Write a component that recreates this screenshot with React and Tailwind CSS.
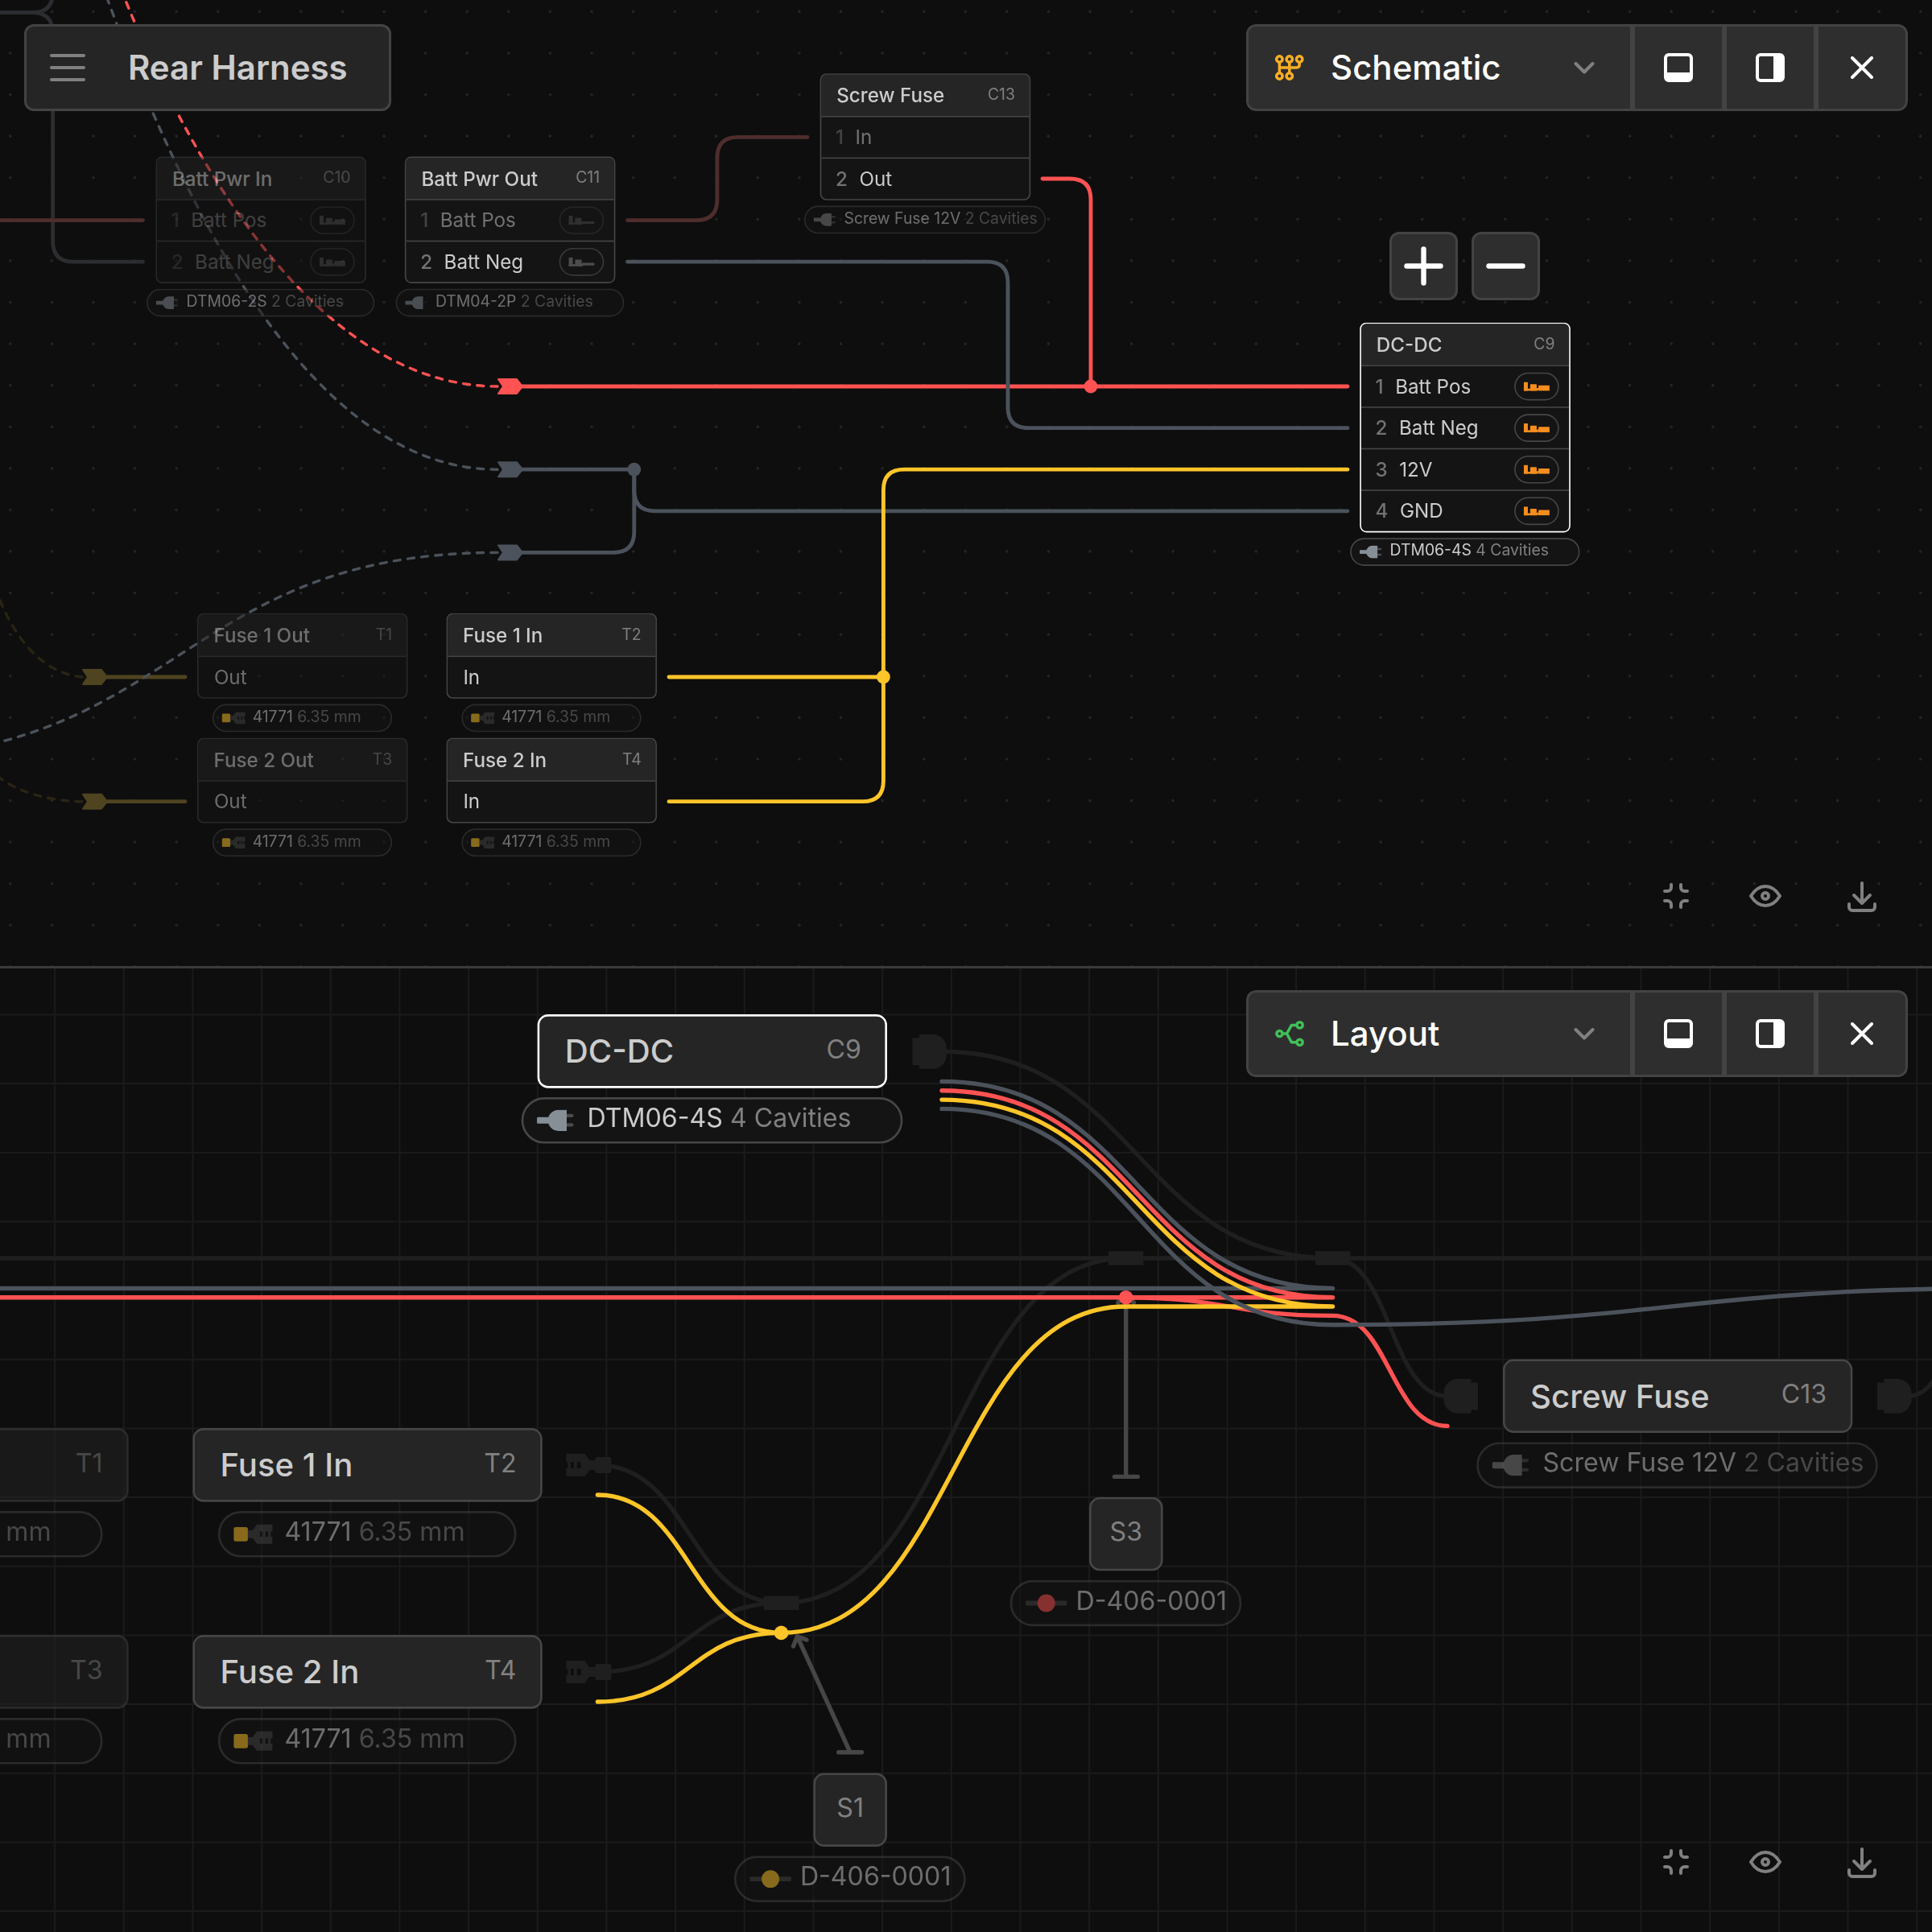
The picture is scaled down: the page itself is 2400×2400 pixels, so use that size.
import React from "react";

const RED = "#ff5252";
const SLATE = "#4b525b";
const YELLOW = "#ffc529";

/* One grid cell of a canvas. Nodes are drawn large and scaled down by their canvas. */
const CELL = 128;

/* ---------- icons ---------- */

function SchematicIcon() {
  return (
    <svg width="36" height="32" viewBox="0 0 36 32" fill="none" stroke="#fcae24" strokeWidth="3.5">
      <circle cx="5.4" cy="5.5" r="3.7" />
      <circle cx="17.8" cy="5.5" r="3.7" />
      <circle cx="30.2" cy="5.5" r="3.7" />
      <circle cx="5.4" cy="26.5" r="3.7" />
      <circle cx="17.8" cy="26.5" r="3.7" />
      <path d="M5.4 9V23M17.8 9V23M5.4 16H26.5Q30.2 16 30.2 12.3V9" />
    </svg>
  );
}

function LayoutIcon() {
  return (
    <svg width="36" height="32" viewBox="0 0 36 32" fill="none" stroke="#40c057" strokeWidth="3.5" strokeLinejoin="round">
      <circle cx="5.5" cy="16" r="3.6" />
      <circle cx="30.6" cy="5.4" r="3.6" />
      <circle cx="30.6" cy="26.8" r="3.6" />
      <path d="M9 16H14.5L20.5 5.4H27M14.5 16L20.5 26.8H27" />
    </svg>
  );
}

function PanelBottomIcon() {
  return (
    <svg width="36" height="36" viewBox="0 0 36 36" fill="#fff" fillRule="evenodd">
      <path d="M6 0H30A6 6 0 0 1 36 6V30A6 6 0 0 1 30 36H6A6 6 0 0 1 0 30V6A6 6 0 0 1 6 0ZM6 4A2 2 0 0 0 4 6V24H32V6A2 2 0 0 0 30 4Z" />
    </svg>
  );
}

function PanelRightIcon() {
  return (
    <svg width="36" height="36" viewBox="0 0 36 36" fill="#fff" fillRule="evenodd">
      <path d="M6 0H30A6 6 0 0 1 36 6V30A6 6 0 0 1 30 36H6A6 6 0 0 1 0 30V6A6 6 0 0 1 6 0ZM6 4A2 2 0 0 0 4 6V30A2 2 0 0 0 6 32H22V4Z" />
    </svg>
  );
}

function CloseIcon() {
  return (
    <svg width="28" height="28" viewBox="0 0 28 28" stroke="#fff" strokeWidth="4" strokeLinecap="round">
      <path d="M2 2L26 26M26 2L2 26" />
    </svg>
  );
}

function ChevronIcon() {
  return (
    <svg width="26" height="15" viewBox="0 0 26 15" fill="none" stroke="#808080" strokeWidth="4" strokeLinecap="round" strokeLinejoin="round">
      <path d="M2.5 2L13 12.5L23.5 2" />
    </svg>
  );
}

function PlugIcon({ color, prongs }) {
  return (
    <svg viewBox="0 0 17.2 10" className="h-[40px] w-[69px] shrink-0">
      {prongs && <path d="M13 2H16.2Q17 2 17 2.8T16.2 3.6H13ZM13 6.3H16.2Q17 6.3 17 7.1T16.2 7.9H13Z" fill="#4a4a4a" />}
      <rect x="0" y="3.5" width="7" height="3" rx="0.5" fill={color} />
      <path d="M13.8 0.1H10A4.9 4.9 0 0 0 10 9.9H13.8Z" fill={color} />
    </svg>
  );
}

function TerminalIcon() {
  return (
    <svg viewBox="0 0 18.2 10" className="h-[40px] w-[73px] shrink-0">
      <rect x="0" y="1.7" width="6.6" height="6.6" rx="1" fill="#ffc629" />
      <path
        fillRule="evenodd"
        fill="#464646"
        d="M6.6 3.2H8.8L10.8 0.5H18V3.8H17.2V6.2H18V9.5H10.8L8.8 6.8H6.6ZM12.2 3.8V6.2H13.4V3.8ZM14.8 3.8V6.2H16V3.8Z"
      />
    </svg>
  );
}

function SpliceIcon({ color }) {
  return (
    <svg viewBox="0 0 19.2 10" className="h-[40px] w-[77px] shrink-0">
      <rect x="0" y="3.9" width="19.2" height="2.2" rx="0.4" fill="#464646" />
      <circle cx="9.6" cy="5" r="4.1" fill={color} />
    </svg>
  );
}

function PinIcon({ color, male }) {
  return (
    <svg viewBox="0 0 20 7" fill={color} className="h-[28px] w-[80px]">
      <rect x="0" y="0" width="3.2" height="7" rx="0.4" />
      <rect x="0" y="5.2" width="11" height="1.7" />
      <rect x="5" y="1.7" width="5" height="5.2" rx="0.4" />
      {male ? (
        <rect x="10" y="4.3" width="10" height="1.9" rx="0.5" />
      ) : (
        <>
          <rect x="11.4" y="2.7" width="8.5" height="4.2" rx="0.4" />
          <rect x="10" y="4.7" width="2" height="1.5" />
        </>
      )}
    </svg>
  );
}

/* ---------- nodes ---------- */

const PLUGS = { slate: "#868e96", gray: "#808080" };

function PartPill({ part }) {
  return (
    <div
      className={
        "mt-[17px] mr-[2px] flex h-[86px] shrink-0 items-center rounded-full border-4 border-[#464646] bg-[#141414] pl-[25px] text-[48px] whitespace-pre " +
        (part.bright ? "opacity-100" : "opacity-50")
      }
      style={{ width: part.width }}
    >
      <span className={"flex shrink-0 items-center " + (part.icon === "terminal" ? "w-[95px]" : "w-[94px]")}>
        {part.icon === "plug" && <PlugIcon color={PLUGS[part.tone]} prongs={part.prongs} />}
        {part.icon === "terminal" && <TerminalIcon />}
        {part.icon === "splice" && <SpliceIcon color={part.tone} />}
      </span>
      <span className="relative -top-[5px] text-[#cccccc]">
        {part.name}
        {part.detail && <span className="text-[#808080]">{" " + part.detail}</span>}
      </span>
    </div>
  );
}

function Placed({ x, y, width, children }) {
  return (
    <div className="absolute flex flex-col items-center" style={{ left: x * CELL, top: y * CELL, width }}>
      {children}
    </div>
  );
}

function Pin({ pin, numbered, index }) {
  return (
    <div className="flex h-[128px] items-center border-t-4 border-[#464646] pr-[31px] pl-[44px] text-[60px]">
      <div className={"flex flex-1 items-center gap-[32px] pb-[3px] " + (pin.dim ? "opacity-50" : "opacity-100")}>
        {numbered && <span className="font-medium text-[#737373]">{index + 1}</span>}
        <span className="pl-[4px] whitespace-nowrap text-[#cccccc]">{pin.label}</span>
      </div>
      {pin.badge && (
        <span
          className={
            "flex h-[86px] w-[138px] items-center justify-center rounded-full border-4 " +
            (pin.badge === "orange" ? "border-[#464646] " : "border-[#393939] ") +
            (pin.dimBadge ? "opacity-50" : "opacity-100")
          }
        >
          <PinIcon color={pin.badge === "orange" ? "#f68d1e" : "#4c4c4c"} male={pin.male} />
        </span>
      )}
    </div>
  );
}

function ConnectorNode({ node }) {
  return (
    <Placed x={node.x} y={node.y} width={649}>
      <div
        className={
          "w-full overflow-hidden rounded-[20px] border-4 " +
          (node.selected ? "border-white " : "border-[#464646] ") +
          (node.pins ? "bg-[#141414] " : "bg-[#252525] pb-[2px] ") +
          (node.dim ? "opacity-50" : "opacity-100")
        }
      >
        <div className="flex h-[127px] items-center justify-between bg-[#252525] pr-[44px] pl-[47px]">
          <span className="text-[60px] font-medium whitespace-nowrap text-[#cccccc]">{node.title}</span>
          <span className="relative -top-[3px] text-[48px] text-[#808080]">{node.tag}</span>
        </div>
        {node.pins && node.pins.map((p, i) => <Pin key={p.label} pin={p} index={i} numbered={node.numbered} />)}
      </div>
      {node.part && <PartPill part={node.part} />}
    </Placed>
  );
}

function SpliceNode({ node }) {
  return (
    <Placed x={node.x} y={node.y} width={137}>
      <div className="flex size-[137px] items-center justify-center rounded-[20px] border-4 border-[#464646] bg-[#252525] text-[48px] text-[#808080]">
        <span className="relative -top-[5px]">{node.tag}</span>
      </div>
      <PartPill part={node.part} />
    </Placed>
  );
}

/* ---------- data ---------- */

const terminalPart = { icon: "terminal", name: "41771", detail: "6.35 mm", width: 554 };
const screwPart = { icon: "plug", tone: "gray", prongs: true, name: "Screw Fuse 12V", detail: "2 Cavities", width: 745 };
const dcPart = { icon: "plug", tone: "slate", prongs: true, bright: true, name: "DTM06-4S", detail: "4 Cavities", width: 708 };

const schematicNodes = [
  {
    x: 4, y: 4, title: "Batt Pwr In", tag: "C10", dim: true, numbered: true,
    pins: [
      { label: "Batt Pos", badge: "gray", dim: true },
      { label: "Batt Neg", badge: "gray", dim: true },
    ],
    part: { icon: "plug", tone: "slate", prongs: true, name: "DTM06-2S", detail: "2 Cavities", width: 703 },
  },
  {
    x: 10, y: 4, title: "Batt Pwr Out", tag: "C11", numbered: true,
    pins: [
      { label: "Batt Pos", badge: "gray", male: true, dim: true, dimBadge: true },
      { label: "Batt Neg", badge: "gray", male: true },
    ],
    part: { icon: "plug", tone: "slate", name: "DTM04-2P", detail: "2 Cavities", width: 704 },
  },
  {
    x: 20, y: 2, title: "Screw Fuse", tag: "C13", numbered: true,
    pins: [{ label: "In", dim: true }, { label: "Out" }],
    part: screwPart,
  },
  {
    x: 33, y: 8, title: "DC-DC", tag: "C9", selected: true, numbered: true,
    pins: [
      { label: "Batt Pos", badge: "orange" },
      { label: "Batt Neg", badge: "orange" },
      { label: "12V", badge: "orange" },
      { label: "GND", badge: "orange" },
    ],
    part: dcPart,
  },
  { x: 5, y: 15, title: "Fuse 1 Out", tag: "T1", dim: true, pins: [{ label: "Out" }], part: terminalPart },
  { x: 11, y: 15, title: "Fuse 1 In", tag: "T2", pins: [{ label: "In" }], part: terminalPart },
  { x: 5, y: 18, title: "Fuse 2 Out", tag: "T3", dim: true, pins: [{ label: "Out" }], part: terminalPart },
  { x: 11, y: 18, title: "Fuse 2 In", tag: "T4", pins: [{ label: "In" }], part: terminalPart },
];

const layoutNodes = [
  { x: 7, y: 0, title: "DC-DC", tag: "C9", selected: true, part: dcPart },
  { x: 21, y: 5, title: "Screw Fuse", tag: "C13", part: screwPart },
  { x: -4, y: 6, title: "Fuse 1 Out", tag: "T1", dim: true, part: terminalPart },
  { x: 2, y: 6, title: "Fuse 1 In", tag: "T2", part: terminalPart },
  { x: -4, y: 9, title: "Fuse 2 Out", tag: "T3", dim: true, part: terminalPart },
  { x: 2, y: 9, title: "Fuse 2 In", tag: "T4", part: terminalPart },
];

const splices = [
  { x: 15, y: 7, tag: "S3", part: { icon: "splice", tone: "#ff5252", name: "D-406-0001", width: 430 } },
  { x: 11, y: 11, tag: "S1", part: { icon: "splice", tone: "#ffc629", name: "D-406-0001", width: 430 } },
];

/* ---------- canvases ---------- */

function Arrow({ x, y, color }) {
  return (
    <path
      d="M1-9H24L31 0L24 9H1L7 0Z"
      transform={`translate(${x} ${y})`}
      fill={color}
      stroke={color}
      strokeWidth="2"
      strokeLinejoin="round"
    />
  );
}

function SchematicWires() {
  const dots = [];
  for (let r = 0; r < 24; r++) {
    for (let c = 0; c < 47; c++) {
      dots.push(<circle key={r + "-" + c} cx={12.8 + c * 51.585} cy={14.4 + r * 51.585} r="1.8" />);
    }
  }
  return (
    <svg className="absolute inset-0" width="2400" height="1200" viewBox="0 0 2400 1200" fill="none">
      <g fill="#252525">{dots}</g>
      <g strokeWidth="4.84" strokeLinecap="round">
        <path stroke="#2b2d30" d="M-5 15.7H40Q65.6 15.7 65.6 -10" />
        <path stroke="#2b2d30" d="M-5 15.7H40Q65.6 15.7 65.6 41.5V299.5Q65.6 325.2 91.4 325.2H177.5" />
        <path stroke="#4f2d2d" d="M-5 273.6H177.5" />
        <path stroke="#4f2d2d" d="M779.5 273.6H865Q890.9 273.6 890.9 247.8V196Q890.9 170.4 916.7 170.4H1003" />
        <path stroke="#4f4420" d="M130 841H230M130 995.7H230" />
        <path stroke={RED} d="M645 480H1674M1295 222H1329.2Q1355 222 1355 247.8V480" />
        <path stroke={SLATE} d="M779.5 325.2H1226.2Q1252 325.2 1252 351V506Q1252 531.7 1277.8 531.7H1674" />
        <path stroke={SLATE} d="M645 583.2H787.8V609Q787.8 634.8 813.6 634.8H1674" />
        <path stroke={SLATE} d="M645 686.4H762Q787.8 686.4 787.8 660.6V583.2" />
        <path stroke={YELLOW} d="M1674 583.2H1123.2Q1097.4 583.2 1097.4 609V970Q1097.4 995.7 1071.6 995.7H831" />
        <path stroke={YELLOW} d="M831 841H1097.4" />
      </g>
      <g strokeWidth="3.4" strokeLinecap="round" strokeDasharray="8 9.3">
        <path stroke={RED} d="M618 480C408 480 248.5 232 152.5 -8" />
        <path stroke={SLATE} d="M618 583.2C390 583.2 234 272 132 -5" />
        <path stroke={SLATE} d="M618 686.4C222 686.4 222 942 -174 942" />
        <path stroke="#2a2414" d="M102 841C48 836 14 785 -4 735" />
        <path stroke="#2a2414" d="M102 995.7C60 995 20 984 -6 962" />
      </g>
      <Arrow x={618} y={480} color={RED} />
      <Arrow x={618} y={583.2} color={SLATE} />
      <Arrow x={618} y={686.4} color={SLATE} />
      <Arrow x={102} y={841} color="#4f4420" />
      <Arrow x={102} y={995.7} color="#4f4420" />
      <circle cx="1355" cy="480" r="8.4" fill={RED} />
      <circle cx="787.8" cy="583.2" r="8.4" fill={SLATE} />
      <circle cx="1097.4" cy="841" r="8.4" fill={YELLOW} />
    </svg>
  );
}

function Plug({ x, y, flip }) {
  return (
    <path
      transform={`translate(${x} ${y})` + (flip ? " scale(-1 1)" : "")}
      fill="#1f1f1f"
      d="M0-17H8.5V-21.4H25A17.4 17.4 0 0 1 42.6-4V4A17.4 17.4 0 0 1 25 21.4H8.5V17H0Z"
    />
  );
}

function Crimp({ x, y }) {
  return (
    <g transform={`translate(${x} ${y})`} fill="#1f1f1f">
      <path
        fillRule="evenodd"
        d="M0-14H23.4L29-6H37V6H29L23.4 14H0V4H2V-4H0ZM5.7-4V4H9.7V-4ZM13.7-4V4H18.3V-4Z"
      />
      <rect x="36" y="-10" width="20" height="20" rx="2.5" />
    </g>
  );
}

function LayoutWires() {
  return (
    <svg className="absolute inset-0" width="2400" height="1200" viewBox="0 1200 2400 1200" fill="none">
      <g stroke="#1b1b1b" strokeWidth="2">
        {Array.from({ length: 28 }, (_, i) => (
          <path key={"v" + i} d={`M${68.1 + i * 85.67} 1200V2400`} />
        ))}
        {Array.from({ length: 14 }, (_, i) => (
          <path key={"h" + i} d={`M0 ${1260.4 + i * 85.67}H2400`} />
        ))}
      </g>
      <g stroke="#1f1f1f" strokeWidth="5.4">
        <path d="M0 1563H2400" />
        <path d="M1170 1306.3C1413 1306.3 1413 1563 1655.5 1563" />
        <path d="M1655.5 1563C1727 1563 1727 1734.4 1798 1734.4" />
        <path d="M970.5 1991.3C1184.5 1991.3 1184.5 1563 1398.6 1563" />
        <path d="M742.4 1820C856.4 1820 856.4 1991.3 970.5 1991.3" />
        <path d="M742.4 2077C856.4 2077 856.4 1991.3 970.5 1991.3" />
        <path d="M2370 1734.4C2386 1734.4 2396 1724 2404 1712" />
      </g>
      <g fill="#1f1f1f">
        <rect x="1377" y="1554.2" width="43.4" height="17.4" />
        <rect x="1634" y="1554.2" width="43.4" height="17.4" />
        <rect x="949" y="1982.6" width="43.4" height="17.4" />
      </g>
      <Plug x={1133.4} y={1306.3} />
      <Plug x={1836} y={1734.4} flip />
      <Plug x={2332} y={1734.4} />
      <Crimp x={703.2} y={1820} />
      <Crimp x={703.2} y={2077} />
      <g stroke="#464646" strokeWidth="5.4" strokeLinecap="round" strokeLinejoin="round">
        <path d="M1384.5 1834.4H1413.3M1398.7 1834.4V1608.5M1389 1618L1398.7 1608.5L1408.4 1618" />
        <path d="M1041.7 2176.7H1070.5M1056 2176.7L990.4 2032.8M985.5 2045L990.4 2032.8L1002 2037" />
      </g>
      <g strokeWidth="5.36" strokeLinecap="round">
        <path stroke={SLATE} d="M0 1600.4H1655.5M1170 1343.4C1413 1343.4 1413 1600.4 1655.5 1600.4" />
        <path stroke={RED} d="M0 1611.8H1655.5M1170 1354.8C1413 1354.8 1413 1611.8 1655.5 1611.8" />
        <path stroke={RED} d="M1398.6 1611.8C1527 1611.8 1527 1634.4 1655.5 1634.4C1727 1634.4 1727 1771.4 1798 1771.4" />
        <path stroke={YELLOW} d="M1398.6 1623H1655.5M1170 1366.1C1413 1366.1 1413 1623 1655.5 1623" />
        <path stroke={YELLOW} d="M970.5 2028.4C1184.5 2028.4 1184.5 1623 1398.6 1623" />
        <path stroke={YELLOW} d="M742.4 1857C856.4 1857 856.4 2028.4 970.5 2028.4" />
        <path stroke={YELLOW} d="M742.4 2114C856.4 2114 856.4 2028.4 970.5 2028.4" />
        <path stroke={SLATE} d="M1170 1377.4C1413 1377.4 1413 1645.7 1655.5 1645.7C2075 1645.7 2075 1600.4 2495 1600.4" />
      </g>
      <circle cx="1398.7" cy="1611.8" r="8.8" fill={RED} />
      <circle cx="970.5" cy="2028.4" r="8.8" fill={YELLOW} />
    </svg>
  );
}

/* ---------- chrome ---------- */

function PanelToolbar({ icon, label }) {
  return (
    <div className="absolute top-[30px] right-[30px] flex h-[108px] overflow-hidden rounded-xl text-white">
      <button className="flex w-[480px] items-center rounded-l-xl border-[3px] border-[#434343] bg-[#2e2e2e] pr-[44px] pl-[33px]">
        {icon}
        <span className="ml-[33px] flex-1 text-left text-[42px] leading-none font-medium">{label}</span>
        <ChevronIcon />
      </button>
      <button className="flex w-[114px] items-center justify-center border-[3px] border-[#434343] bg-[#2e2e2e]">
        <PanelBottomIcon />
      </button>
      <button className="flex w-[114px] items-center justify-center border-[3px] border-[#434343] bg-[#2e2e2e]">
        <PanelRightIcon />
      </button>
      <button className="flex w-[114px] items-center justify-center rounded-r-xl border-[3px] border-[#434343] bg-[#2e2e2e]">
        <CloseIcon />
      </button>
    </div>
  );
}

function ViewActions() {
  return (
    <div className="absolute right-[67px] bottom-[67px] flex items-center">
      <svg width="40" height="40" viewBox="0 0 40 40" fill="none" stroke="#808080" strokeWidth="4" strokeLinecap="round">
        <path d="M6 14H9.5A4.5 4.5 0 0 0 14 9.5V6M34 14H30.5A4.5 4.5 0 0 1 26 9.5V6M6 26H9.5A4.5 4.5 0 0 1 14 30.5V34M34 26H30.5A4.5 4.5 0 0 0 26 30.5V34" />
      </svg>
      <svg className="ml-[71px]" width="40" height="40" viewBox="0 0 40 40" fill="none" stroke="#808080" strokeWidth="4" strokeLinejoin="round">
        <path d="M2 20Q9.5 8 20 8T38 20Q30.5 32 20 32T2 20Z" />
        <circle cx="20" cy="20" r="4" />
      </svg>
      <svg className="ml-[80px]" width="40" height="40" viewBox="0 0 40 40" fill="none" stroke="#808080" strokeWidth="4" strokeLinecap="round" strokeLinejoin="round">
        <path d="M20 4V29M10 19L20 29L30 19M4 30V34A4 4 0 0 0 8 38H32A4 4 0 0 0 36 34V30" />
      </svg>
    </div>
  );
}

function ZoomButton({ plus }) {
  return (
    <button className="flex size-[85px] items-center justify-center rounded-xl border-[3px] border-[#434343] bg-[#2e2e2e]">
      <svg width="49" height="49" viewBox="0 0 49 49" stroke="#fff" strokeWidth="6.4" strokeLinecap="round">
        <path d={plus ? "M3.5 24.5H45.5M24.5 3.5V45.5" : "M3.5 24.5H45.5"} />
      </svg>
    </button>
  );
}

export default function App() {
  return (
    <div className="flex h-[2400px] w-[2400px] flex-col overflow-hidden bg-[#0e0e0e] font-['Inter',sans-serif]">
      <section className="relative h-[1200px] overflow-hidden">
        <SchematicWires />
        <div className="absolute top-[-11.7px] left-[-13.2px] origin-top-left scale-[0.403]">
          {schematicNodes.map((n) => (
            <ConnectorNode key={n.tag} node={n} />
          ))}
        </div>
        <div className="absolute top-[288px] left-[1726px] flex gap-[17px]">
          <ZoomButton plus />
          <ZoomButton />
        </div>
        <header className="absolute top-[30px] left-[30px] flex h-[108px] w-[456px] items-center rounded-xl border-[3px] border-[#434343] bg-[#252525] pl-[29px]">
          <div className="flex w-[44px] flex-col gap-[11px]">
            <span className="h-1 rounded-full bg-[#808080]" />
            <span className="h-1 rounded-full bg-[#808080]" />
            <span className="h-1 rounded-full bg-[#808080]" />
          </div>
          <h1 className="ml-[53px] text-[42px] leading-none font-semibold whitespace-nowrap text-[#cccccc]">Rear Harness</h1>
        </header>
        <PanelToolbar icon={<SchematicIcon />} label="Schematic" />
        <ViewActions />
      </section>

      <section className="relative h-[1200px] overflow-hidden">
        <LayoutWires />
        <div className="absolute top-[60px] left-[67.7px] origin-top-left scale-[0.66925]">
          {layoutNodes.map((n) => (
            <ConnectorNode key={n.tag} node={n} />
          ))}
          {splices.map((n) => (
            <SpliceNode key={n.tag} node={n} />
          ))}
        </div>
        <div className="absolute inset-x-0 top-0 h-[3px] bg-[#3a3a3a]" />
        <PanelToolbar icon={<LayoutIcon />} label="Layout" />
        <ViewActions />
      </section>
    </div>
  );
}
